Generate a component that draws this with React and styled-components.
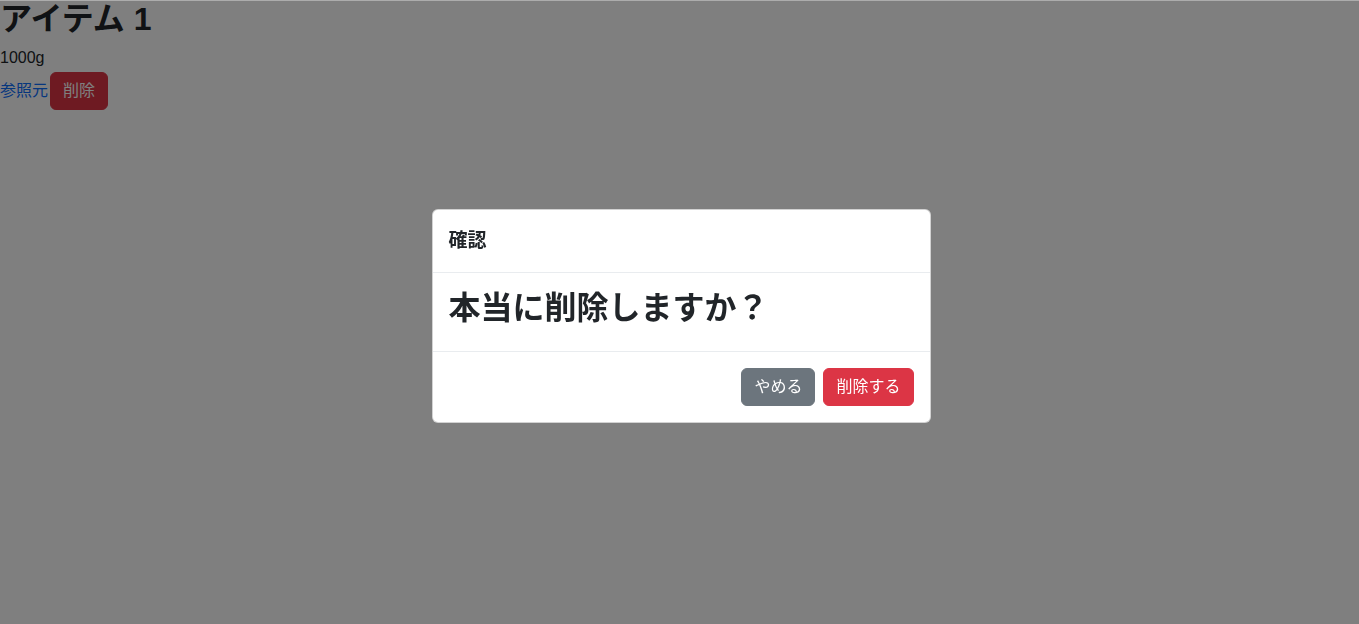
import styled, { createGlobalStyle } from "styled-components";

const GlobalStyle = createGlobalStyle`
  body {
    margin: 0;
    background: #fff;
    color: #212529;
    font-family: "Liberation Sans", "Noto Sans CJK JP", sans-serif;
    font-size: 16px;
    line-height: 1.5;
  }
  * {
    box-sizing: border-box;
  }
`;

const App = () => {
  return (
    <>
      <GlobalStyle />
      <Page>
        <Title>アイテム 1</Title>
        <Weight>1000g</Weight>
        <Actions>
          <SourceLink href="#">参照元</SourceLink>
          <Button variant="danger">削除</Button>
        </Actions>
      </Page>

      <Backdrop>
        <Dialog role="dialog">
          <Header>
            <DialogTitle>確認</DialogTitle>
          </Header>
          <Body>
            <Question>本当に削除しますか？</Question>
          </Body>
          <Footer>
            <Button variant="secondary">やめる</Button>
            <Button variant="danger">削除する</Button>
          </Footer>
        </Dialog>
      </Backdrop>
    </>
  );
};

export default App;

const colors = {
  danger: "#dc3545",
  secondary: "#6c757d",
};

const Page = styled.div`
  padding: 0;
`;

const Title = styled.h2`
  margin: 0 0 8px;
  font-size: 32px;
  font-weight: 700;
  line-height: 38px;
`;

const Weight = styled.div`
  font-size: 16px;
  line-height: 24px;
`;

const Actions = styled.div`
  display: flex;
  align-items: center;
  gap: 2px;
  margin-top: 2px;
`;

const SourceLink = styled.a`
  color: #0d6efd;
  text-decoration: none;
  font-size: 16px;
`;

const Button = styled.button`
  display: inline-block;
  height: 38px;
  padding: 6px 12px;
  border: 1px solid ${(p) => colors[p.variant]};
  border-radius: 6px;
  background: ${(p) => colors[p.variant]};
  color: #fff;
  font-family: inherit;
  font-size: 16px;
  line-height: 24px;
  cursor: pointer;
`;

const Backdrop = styled.div`
  position: fixed;
  inset: 0;
  background: rgba(0, 0, 0, 0.5);
  border-top: 1px solid rgba(255, 255, 255, 0.35);
  display: flex;
  align-items: center;
  justify-content: center;
  padding: 6px 0 0 3px;
`;

const Dialog = styled.div`
  width: 499px;
  background: #fff;
  border: 1px solid rgba(0, 0, 0, 0.175);
  border-radius: 6px;
  display: flex;
  flex-direction: column;
`;

const Header = styled.div`
  display: flex;
  align-items: center;
  padding: 16px;
  border-bottom: 1px solid #e9ecef;
`;

const DialogTitle = styled.h5`
  margin: 0;
  font-size: 19px;
  font-weight: 700;
  line-height: 30px;
`;

const Body = styled.div`
  padding: 16px;
`;

const Question = styled.h2`
  margin: 0 0 8px;
  font-size: 32px;
  font-weight: 700;
  line-height: 38px;
`;

const Footer = styled.div`
  display: flex;
  justify-content: flex-end;
  align-items: center;
  padding: 12px;
  border-top: 1px solid #e9ecef;

  & > button {
    margin: 4px;
  }
`;
